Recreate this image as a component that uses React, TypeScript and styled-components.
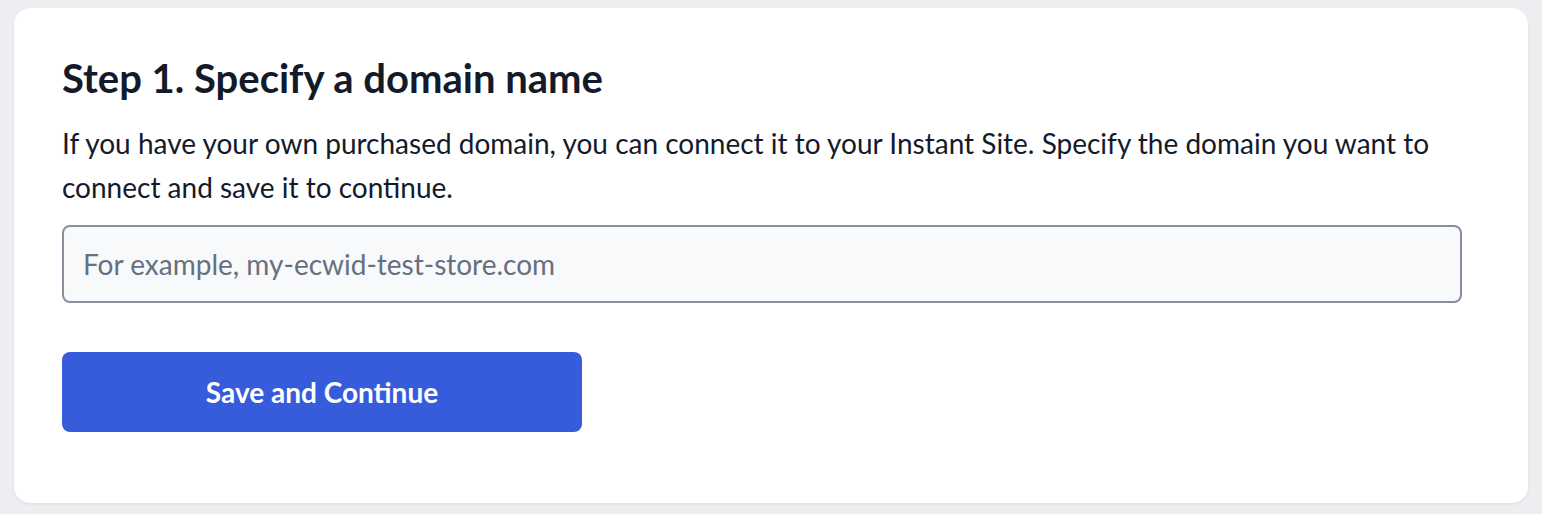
import React from "react";
import styled, { createGlobalStyle } from "styled-components";

const Global = createGlobalStyle`
  html, body { margin: 0; padding: 0; background: #eceef1; }
  body { font-family: Lato, "Noto Sans", sans-serif; }
  * { box-sizing: border-box; }
`;

const Page = styled.div`
  padding: 8px 14px 11px 14px;
`;

const Card = styled.section`
  background: #ffffff;
  border-radius: 16px;
  box-shadow: 0 1px 3px rgba(20, 30, 50, 0.08);
  padding: 46px 48px 71px 48px;
  display: flex;
  flex-direction: column;
  align-items: flex-start;
`;

const Title = styled.h1`
  margin: 0;
  font-size: 40px;
  font-weight: 700;
  line-height: 48px;
  color: #131b2b;
`;

const Text = styled.p`
  margin: 19px 0 0 0;
  font-size: 28px;
  line-height: 44px;
  color: #131b2b;
  max-width: 1400px;
`;

const Input = styled.input`
  margin-top: 16px;
  width: 1400px;
  height: 78px;
  border: 2px solid #858f9e;
  border-radius: 8px;
  background: #f8f9fa;
  padding: 0 19px;
  font-family: Lato, "Noto Sans", sans-serif;
  font-size: 28px;
  color: #131b2b;
  outline: none;
  &::placeholder { color: #657080; }
`;

const Button = styled.button`
  margin-top: 49px;
  width: 520px;
  height: 80px;
  border: none;
  border-radius: 8px;
  background: #375cdb;
  color: #ffffff;
  font-family: Lato, "Noto Sans", sans-serif;
  font-size: 28px;
  font-weight: 700;
  cursor: pointer;
`;

export default function App() {
  return (
    <>
      <Global />
      <Page>
        <Card>
          <Title>Step 1. Specify a domain name</Title>
          <Text>
            If you have your own purchased domain, you can connect it to your Instant Site. Specify the domain you want to connect and save it to continue.
          </Text>
          <Input placeholder="For example, my-ecwid-test-store.com" />
          <Button>Save and Continue</Button>
        </Card>
      </Page>
    </>
  );
}
